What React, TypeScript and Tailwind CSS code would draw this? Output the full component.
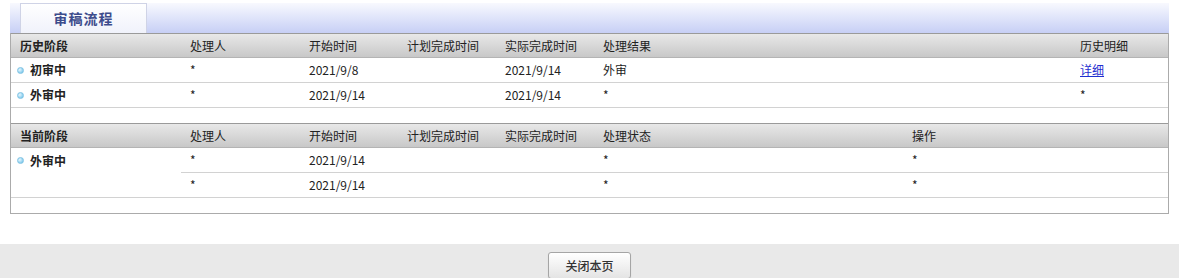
import React from "react";

const font = { fontFamily: '"Noto Sans CJK SC", "Microsoft YaHei", sans-serif' };

function Dot() {
  return (
    <span className="inline-block w-[7px] h-[7px] rounded-full bg-[radial-gradient(circle_at_35%_35%,#e6f6ff,#62bde6)] border border-[#7fc3e4] mr-[6px]" />
  );
}

const headCls =
  "h-[25px] border-t border-t-[#9a9a9a] border-b border-b-[#b4b4b4] bg-gradient-to-b from-[#e8e8e8] to-[#c8c8c8] items-center text-[12px] text-[#222]";

export default function App() {
  const cols1 = "grid grid-cols-[170px_119px_98px_98px_98px_477px_1fr]";
  const cols2 = "grid grid-cols-[170px_119px_98px_98px_98px_309px_1fr]";
  return (
    <div className="w-[1179px] h-[278px] bg-white flex flex-col" style={font}>
      <div className="pt-[3px] px-[10px]">
        {/* Tab bar */}
        <div className="h-[30px] bg-gradient-to-b from-[#f8f9fe] to-[#c7cff5] flex items-end pl-[10px]">
          <div className="w-[127px] h-[30px] bg-gradient-to-b from-white to-[#f0f2fb] border-t border-l border-r border-[#cfd3e6] flex items-center justify-center text-[14px] font-semibold text-[#3d4c8c] tracking-[1px]">
            审稿流程
          </div>
        </div>
        {/* Tables */}
        <div className="border-l border-r border-b border-[#ababab]">
          {/* History table */}
          <div className={`${cols1} ${headCls}`}>
            <div className="pl-[9px] font-bold">历史阶段</div>
            <div className="pl-[9px]">处理人</div>
            <div className="pl-[9px]">开始时间</div>
            <div className="pl-[9px]">计划完成时间</div>
            <div className="pl-[9px]">实际完成时间</div>
            <div className="pl-[9px]">处理结果</div>
            <div className="pl-[9px]">历史明细</div>
          </div>
          <div className={`${cols1} h-[25px] border-b border-[#d2d2d2] items-center text-[12px] text-[#222]`}>
            <div className="pl-[6px] flex items-center font-bold"><Dot />初审中</div>
            <div className="pl-[9px]">*</div>
            <div className="pl-[9px]">2021/9/8</div>
            <div className="pl-[9px]"></div>
            <div className="pl-[9px]">2021/9/14</div>
            <div className="pl-[9px]">外审</div>
            <div className="pl-[9px]"><a href="#" className="text-[#1f2fd0] underline">详细</a></div>
          </div>
          <div className={`${cols1} h-[25px] border-b border-[#d2d2d2] items-center text-[12px] text-[#222]`}>
            <div className="pl-[6px] flex items-center font-bold"><Dot />外审中</div>
            <div className="pl-[9px]">*</div>
            <div className="pl-[9px]">2021/9/14</div>
            <div className="pl-[9px]"></div>
            <div className="pl-[9px]">2021/9/14</div>
            <div className="pl-[9px]">*</div>
            <div className="pl-[9px]">*</div>
          </div>
          <div className="h-[15px]" />
          {/* Current table */}
          <div className={`${cols2} ${headCls}`}>
            <div className="pl-[9px] font-bold">当前阶段</div>
            <div className="pl-[9px]">处理人</div>
            <div className="pl-[9px]">开始时间</div>
            <div className="pl-[9px]">计划完成时间</div>
            <div className="pl-[9px]">实际完成时间</div>
            <div className="pl-[9px]">处理状态</div>
            <div className="pl-[9px]">操作</div>
          </div>
          <div className="flex border-b border-[#d2d2d2] text-[12px] text-[#222]">
            <div className="w-[170px] shrink-0 pl-[6px] h-[25px] flex items-center font-bold"><Dot />外审中</div>
            <div className="flex-1 flex flex-col">
              <div className="grid grid-cols-[119px_98px_98px_98px_309px_1fr] h-[25px] border-b border-[#d2d2d2] items-center">
                <div className="pl-[9px]">*</div>
                <div className="pl-[9px]">2021/9/14</div>
                <div className="pl-[9px]"></div>
                <div className="pl-[9px]"></div>
                <div className="pl-[9px]">*</div>
                <div className="pl-[9px]">*</div>
              </div>
              <div className="grid grid-cols-[119px_98px_98px_98px_309px_1fr] h-[24px] items-center">
                <div className="pl-[9px]">*</div>
                <div className="pl-[9px]">2021/9/14</div>
                <div className="pl-[9px]"></div>
                <div className="pl-[9px]"></div>
                <div className="pl-[9px]">*</div>
                <div className="pl-[9px]">*</div>
              </div>
            </div>
          </div>
          <div className="h-[15px]" />
        </div>
      </div>
      <div className="mt-[30px] flex-1 bg-[#e9e9e9] flex justify-center pt-[8px]">
        <button className="w-[83px] h-[27px] rounded-[3px] border border-[#a5a5a5] bg-gradient-to-b from-white to-[#e4e4e4] text-[12px] font-medium text-[#333] shadow-[0_1px_1px_rgba(0,0,0,0.15)]">
          关闭本页
        </button>
      </div>
    </div>
  );
}
